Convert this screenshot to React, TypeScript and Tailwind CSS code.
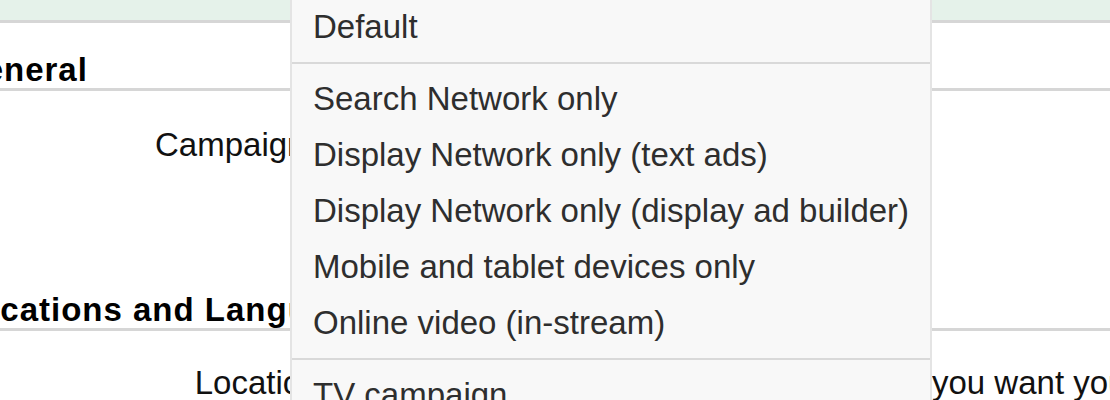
import React from 'react';

const menuGroups: string[][] = [
  ['Default'],
  [
    'Search Network only',
    'Display Network only (text ads)',
    'Display Network only (display ad builder)',
    'Mobile and tablet devices only',
    'Online video (in-stream)',
  ],
  ['TV campaign', 'Shopping'],
];

const TypeMenu: React.FC = () => {
  return (
    <div className="absolute left-[290px] top-[-8px] w-[642px] border-x-2 border-[#e4e4e4] bg-[#f8f8f8] text-[#2e2e2e]">
      {menuGroups.map((group, gi) => (
        <div key={gi} className={`py-[7px] ${gi > 0 ? 'border-t-2 border-[#d9d9d9]' : ''}`}>
          {group.map(item => (
            <div key={item} className="h-[56px] pl-[21px] leading-[56px] whitespace-nowrap">
              {item}
            </div>
          ))}
        </div>
      ))}
    </div>
  );
};

export default function App() {
  return (
    <div
      className="relative w-[1110px] h-[400px] overflow-hidden bg-white text-[33px] text-[#111]"
      style={{ fontFamily: '"Liberation Sans", Arial, sans-serif' }}
    >
      <div className="ml-[-39px] w-[1149px]">
        <div className="h-[23px] bg-[#e5f2ea] border-b-[3px] border-[#d6d6d6]" />

        <h2 className="mt-[29px] -ml-[3px] h-[39px] leading-[36px] font-bold tracking-[1px] text-black border-b-[3px] border-[#d6d6d6] whitespace-nowrap">
          General
        </h2>

        <div className="mt-[36px] h-[165px] grid grid-cols-[472px_1fr] leading-[36px]">
          <div className="pr-[56px] text-right whitespace-nowrap">Campaign type</div>
          <div className="whitespace-nowrap">Search &amp; Display Networks</div>
        </div>

        <h2 className="-ml-[3px] h-[39px] leading-[36px] font-bold tracking-[1px] text-black border-b-[3px] border-[#d6d6d6] whitespace-nowrap">
          Locations and Languages
        </h2>

        <div className="mt-[34px] grid grid-cols-[472px_1fr] leading-[36px]">
          <div className="pr-[97px] text-right whitespace-nowrap">Locations</div>
          <div className="whitespace-nowrap">In what geographical locations do you want your ads to appear?</div>
        </div>
      </div>

      <TypeMenu />
    </div>
  );
}
